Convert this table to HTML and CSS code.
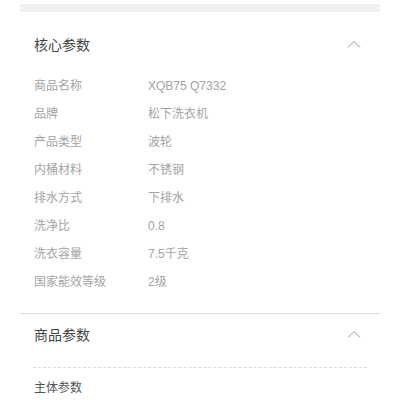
FILE: index.html
```html
<!DOCTYPE html>
<html lang="zh-CN">
<head>
    <meta charset="UTF-8">
    <meta name="viewport" content="width=device-width, initial-scale=1.0">
    <title>商品参数</title>
    <link rel="stylesheet" href="styles.css">
</head>
<body>
    <div class="page">
        <div class="top-strip"></div>

        <!-- 核心参数 -->
        <div class="section section-core">
            <div class="section-head">
                <span class="section-title">核心参数</span>
                <svg class="chevron" width="14" height="8" viewBox="0 0 14 8">
                    <path d="M1 7.5 L7 1.5 L13 7.5" fill="none" stroke="#999" stroke-width="1"/>
                </svg>
            </div>
            <div class="param-list">
                <div class="param-row"><span class="param-name">商品名称</span><span class="param-value">XQB75 Q7332</span></div>
                <div class="param-row"><span class="param-name">品牌</span><span class="param-value">松下洗衣机</span></div>
                <div class="param-row"><span class="param-name">产品类型</span><span class="param-value">波轮</span></div>
                <div class="param-row"><span class="param-name">内桶材料</span><span class="param-value">不锈钢</span></div>
                <div class="param-row"><span class="param-name">排水方式</span><span class="param-value">下排水</span></div>
                <div class="param-row"><span class="param-name">洗净比</span><span class="param-value">0.8</span></div>
                <div class="param-row"><span class="param-name">洗衣容量</span><span class="param-value">7.5千克</span></div>
                <div class="param-row"><span class="param-name">国家能效等级</span><span class="param-value">2级</span></div>
            </div>
        </div>

        <!-- 商品参数 -->
        <div class="section section-goods">
            <div class="section-head">
                <span class="section-title">商品参数</span>
                <svg class="chevron" width="14" height="8" viewBox="0 0 14 8">
                    <path d="M1 7.5 L7 1.5 L13 7.5" fill="none" stroke="#999" stroke-width="1"/>
                </svg>
            </div>
            <div class="group-title">主体参数</div>
        </div>
    </div>
</body>
</html>
```

FILE: styles.css
```css
body {
    margin: 0;
    background: #fff;
    font-family: "Liberation Sans", "Noto Sans CJK SC", sans-serif;
}

.page {
    padding: 0 20px;
}

.top-strip {
    margin-top: 4px;
    height: 8px;
    background: #f0f0f0;
}

.section {
    padding: 0 19px 0 14px;
}

.section-head {
    display: flex;
    align-items: center;
    justify-content: space-between;
    height: 20px;
}

.section-title {
    font-size: 14px;
    line-height: 20px;
    color: #444;
}

.chevron {
    display: block;
    margin-top: -3px;
}

/* 核心参数 */
.section-core {
    padding-top: 23px;
    padding-bottom: 17px;
    border-bottom: 1px solid #ddd;
}

.param-list {
    margin-top: 17px;
}

.param-row {
    display: flex;
    height: 28px;
    line-height: 28px;
    font-size: 12px;
    color: #a3a3a3;
}

.param-name {
    width: 114px;
}

/* 商品参数 */
.section-goods {
    padding-top: 11px;
}

.group-title {
    margin: 22px -6px 0 -1px;
    padding: 10px 0 0 1px;
    border-top: 1px dashed #ddd;
    font-size: 12px;
    line-height: 20px;
    color: #555;
}
```
